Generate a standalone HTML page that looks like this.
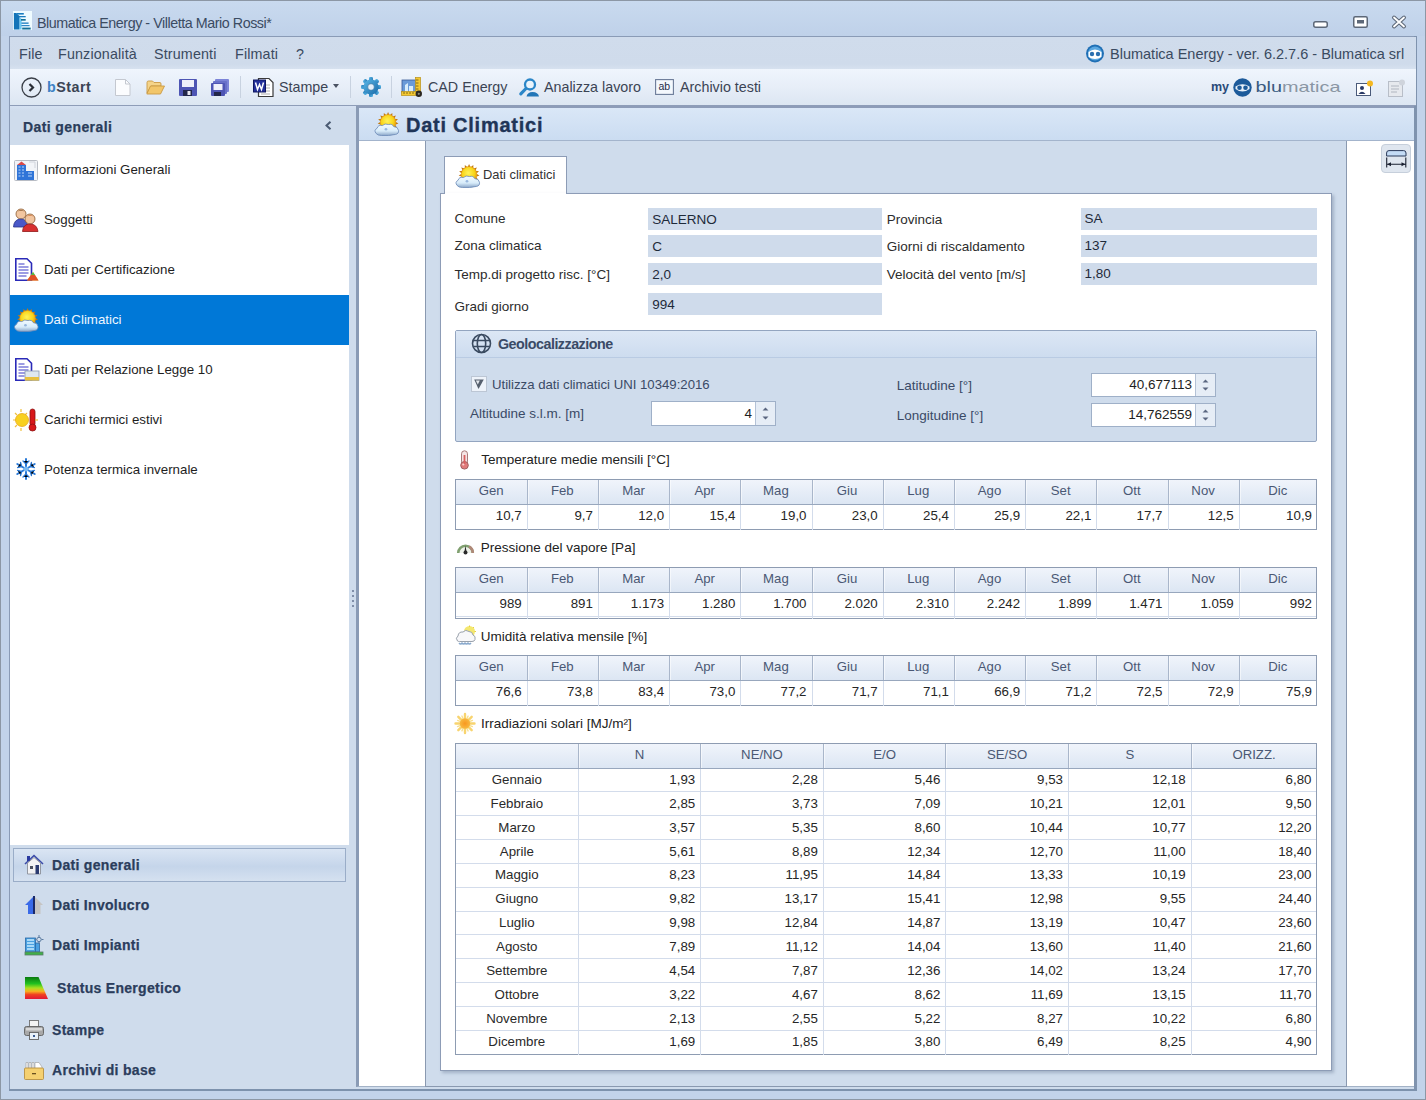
<!DOCTYPE html>
<html><head><meta charset="utf-8">
<style>
*{margin:0;padding:0;box-sizing:border-box}
html,body{width:1426px;height:1100px;overflow:hidden}
body{position:relative;background:#c3d4ea;font-family:"Liberation Sans",sans-serif;color:#222}
.a{position:absolute}
.t{position:absolute;white-space:nowrap;line-height:1}
svg{position:absolute;overflow:visible}
</style></head><body>
<div class="a" style="left:0px;top:0px;width:1426px;height:1100px;border:1px solid #8c97a5;background:#c2d3ea"></div>
<div class="a" style="left:1px;top:1px;width:1424px;height:35px;background:linear-gradient(#c9daef,#bfd1e9)"></div>
<svg style="left:13px;top:11px" width="19" height="19" viewBox="0 0 19 19"><rect x="0" y="0" width="19" height="19" fill="#effbff"/>
<path d="M0.9 2 L3 2 L6.6 5 V18.6 H0.9Z" fill="#1474b8"/>
<path d="M6.6 6 L8.6 8 V18.6 H6.6Z" fill="#6ccaf4"/>
<rect x="3.3" y="2" width="7.5" height="1.6" fill="#1a7cc0"/>
<rect x="5.7" y="5" width="7" height="1.3" fill="#1a7cc0"/>
<rect x="8" y="8" width="4.7" height="1.7" fill="#147098"/>
<rect x="8.4" y="11.5" width="7.2" height="1.3" fill="#1a7cc0"/>
<rect x="8.4" y="14.1" width="8.2" height="1.1" fill="#1a7cc0"/>
<rect x="9.2" y="16.6" width="8.5" height="1.9" fill="#147098"/></svg>
<div class="t" style="top:15.50px;font-size:14.3px;color:#3b4b62;letter-spacing:-0.45px;left:37px;">Blumatica Energy - Villetta Mario Rossi*</div>
<svg style="left:1313px;top:21px" width="15" height="7" viewBox="0 0 15 7"><rect x="0.75" y="0.75" width="13.5" height="5.5" rx="2" fill="#fff" stroke="#5d6878" stroke-width="1.5"/></svg>
<svg style="left:1353px;top:16px" width="15" height="12" viewBox="0 0 15 12"><rect x="0.75" y="0.75" width="13.5" height="10.5" rx="1.5" fill="#fff" stroke="#5d6878" stroke-width="1.5"/><rect x="4" y="4" width="7" height="3.5" fill="#5d6878"/></svg>
<svg style="left:1392px;top:16px" width="14" height="12" viewBox="0 0 14 12"><path d="M2 1.5 L12 10.5 M12 1.5 L2 10.5" stroke="#5d6878" stroke-width="4" stroke-linecap="round"/><path d="M2 1.5 L12 10.5 M12 1.5 L2 10.5" stroke="#fff" stroke-width="1.8" stroke-linecap="round"/></svg>
<div class="a" style="left:9px;top:36px;width:1408px;height:1055px;border-left:1px solid #8a9bb6;border-top:1px solid #8a9bb6;background:#cfdcec"></div>
<div class="a" style="left:1414px;top:36px;width:3px;height:1055px;background:#7f93ae"></div>
<div class="a" style="left:9px;top:1089px;width:1408px;height:2px;background:#7d92ad"></div>
<div class="a" style="left:10px;top:37px;width:1406px;height:32px;background:linear-gradient(#d0dcec,#cfdbeb 85%,#d6e1ef)"></div>
<div class="t" style="top:47.10px;font-size:14.3px;color:#3a4a60;letter-spacing:0.15px;left:19px;">File</div>
<div class="t" style="top:47.10px;font-size:14.3px;color:#3a4a60;letter-spacing:0.15px;left:58px;">Funzionalità</div>
<div class="t" style="top:47.10px;font-size:14.3px;color:#3a4a60;letter-spacing:0.15px;left:154px;">Strumenti</div>
<div class="t" style="top:47.10px;font-size:14.3px;color:#3a4a60;letter-spacing:0.15px;left:235px;">Filmati</div>
<div class="t" style="top:47.10px;font-size:14.3px;color:#3a4a60;letter-spacing:0.15px;left:296px;">?</div>
<svg style="left:1085px;top:44px" width="20" height="19" viewBox="0 0 20 19"><circle cx="10" cy="9.5" r="9" fill="#1f6fb5"/><circle cx="10" cy="9.5" r="7" fill="#5aa7e0"/>
<path d="M3.5 8 Q10 3 16.5 8 L16.5 13 Q10 17 3.5 13Z" fill="#fff"/>
<circle cx="7" cy="10" r="2.2" fill="#2a6fb0"/><circle cx="13" cy="10" r="2.2" fill="#2a6fb0"/></svg>
<div class="t" style="top:46.93px;font-size:14.5px;color:#3a4a60;left:1110px;">Blumatica Energy - ver. 6.2.7.6 - Blumatica srl</div>
<div class="a" style="left:10px;top:69px;width:1406px;height:36px;background:linear-gradient(#eff5fd,#e7eef8 50%,#dce6f2)"></div>
<div class="a" style="left:10px;top:105px;width:1406px;height:1px;background:#8e9db8"></div>
<svg style="left:21px;top:77px" width="21" height="21" viewBox="0 0 21 21"><circle cx="10.5" cy="10.5" r="9.5" fill="none" stroke="#3a3f48" stroke-width="1.3"/><path d="M8.5 7 L12 10.5 L8.5 14" fill="none" stroke="#2a2e36" stroke-width="2.2"/></svg>
<div class="t" style="top:80.10px;font-size:14.3px;color:#3b4454;font-weight:bold;letter-spacing:0.5px;left:47px;"><span style="color:#3d82c4">b</span>Start</div>
<svg style="left:115px;top:79px" width="16" height="17" viewBox="0 0 16 17"><path d="M0.5 0.5 H10.5 L15 5 V16.5 H0.5Z" fill="#fbfcfe" stroke="#c4c8d0"/><path d="M10.5 0.5 V5 H15" fill="none" stroke="#c4c8d0"/></svg>
<svg style="left:146px;top:80px" width="19" height="15" viewBox="0 0 19 15"><path d="M1 2.5 Q1 1 2.5 1 H6.5 L8 2.5 H14 Q15 2.5 15 4 V6 H5 L1 13Z" fill="#f5d48a" stroke="#c99a45" stroke-width="0.9"/><path d="M4.5 6 H18.5 L14.5 14 H0.8Z" fill="#f2c66a" stroke="#c99a45" stroke-width="0.9"/></svg>
<svg style="left:179px;top:79px" width="18" height="17" viewBox="0 0 18 17"><rect x="0" y="0" width="18" height="17" rx="1" fill="#4e55b4"/><rect x="3" y="1" width="12" height="7" fill="#eef0fa"/><rect x="4" y="11" width="9" height="6" fill="#23264a"/><rect x="8.5" y="12" width="3" height="4" fill="#e8e8f0"/></svg>
<svg style="left:211px;top:79px" width="18" height="17" viewBox="0 0 18 17"><rect x="4" y="0" width="14" height="13" rx="1" fill="#7c84d8"/><rect x="2" y="2" width="14" height="13" rx="1" fill="#6870c8"/><rect x="0" y="4" width="14" height="13" rx="1" fill="#4e55b4"/><rect x="2.5" y="5" width="9" height="6" fill="#eef0fa"/><rect x="3" y="13" width="7" height="4" fill="#23264a"/></svg>
<div class="a" style="left:240px;top:76px;width:1px;height:22px;background:#c8d2e0"></div>
<svg style="left:253px;top:77px" width="21" height="20" viewBox="0 0 21 20"><path d="M5.5 1.5 H16 L20 5.5 V19.5 H5.5Z" fill="#fff" stroke="#3a3a3a" stroke-width="1.2"/><path d="M8 8h9M8 11h9M8 14h9M8 17h9" stroke="#999" stroke-width="0.8"/><rect x="0.5" y="3" width="12" height="12" fill="#24309a" stroke="#101860"/><path d="M2.5 5.5 L4.5 12.5 L6.5 7.5 L8.5 12.5 L10.5 5.5" fill="none" stroke="#fff" stroke-width="1.5"/></svg>
<div class="t" style="top:80.10px;font-size:14.3px;color:#3b4454;left:279px;">Stampe</div>
<svg style="left:333px;top:84px" width="6" height="4" viewBox="0 0 6 4"><path d="M0 0H6L3 4Z" fill="#4a5262"/></svg>
<div class="a" style="left:350px;top:76px;width:1px;height:22px;background:#c8d2e0"></div>
<svg style="left:361px;top:77px" width="20" height="20" viewBox="0 0 20 20"><defs><linearGradient id="gearG" x1="0" y1="0" x2="1" y2="1"><stop offset="0" stop-color="#5ab8e8"/><stop offset="1" stop-color="#1a6aa8"/></linearGradient></defs><g transform="translate(10 10)" fill="url(#gearG)"><rect x="-2" y="-10" width="4" height="5" rx="1.2" transform="rotate(0)"/><rect x="-2" y="-10" width="4" height="5" rx="1.2" transform="rotate(45)"/><rect x="-2" y="-10" width="4" height="5" rx="1.2" transform="rotate(90)"/><rect x="-2" y="-10" width="4" height="5" rx="1.2" transform="rotate(135)"/><rect x="-2" y="-10" width="4" height="5" rx="1.2" transform="rotate(180)"/><rect x="-2" y="-10" width="4" height="5" rx="1.2" transform="rotate(225)"/><rect x="-2" y="-10" width="4" height="5" rx="1.2" transform="rotate(270)"/><rect x="-2" y="-10" width="4" height="5" rx="1.2" transform="rotate(315)"/><circle r="7.6"/><circle r="3.3" fill="#e4f0fa" stroke="#2a6a98" stroke-width="0.6"/></g></svg>
<div class="a" style="left:391px;top:76px;width:1px;height:22px;background:#c8d2e0"></div>
<svg style="left:401px;top:77px" width="22" height="20" viewBox="0 0 22 20"><rect x="1" y="3" width="14" height="13" fill="#6a9ad8" stroke="#3a5a98" stroke-width="0.8"/><path d="M4 15 V8 L7 6 V15Z M8 15 V9 H12 V15Z" fill="#d8ecfa"/><rect x="14.5" y="0.5" width="5" height="17" fill="#f4c830" stroke="#b89018" stroke-width="0.7"/><path d="M15 3h2.5M15 6h2.5M15 9h2.5M15 12h2.5" stroke="#6a5010" stroke-width="0.8"/><rect x="0.5" y="14.5" width="15" height="4" fill="#f4c830" stroke="#b89018" stroke-width="0.7"/><path d="M3 15v2M6 15v2M9 15v2M12 15v2" stroke="#6a5010" stroke-width="0.8"/><circle cx="17.8" cy="16.8" r="3.2" fill="#2a2620"/><circle cx="17.8" cy="16.8" r="1.1" fill="#8a8a80"/></svg>
<div class="t" style="top:80.10px;font-size:14.3px;color:#3b4454;left:428px;">CAD Energy</div>
<svg style="left:519px;top:78px" width="21" height="19" viewBox="0 0 21 19"><circle cx="11" cy="6.5" r="5" fill="#eaf4fc" stroke="#2b86c8" stroke-width="2.3"/><path d="M7 10.5 L1.8 15.8" stroke="#2b86c8" stroke-width="3.2" stroke-linecap="round"/><path d="M7.5 18.5 Q8.5 14 13.5 14 Q19 14 20 18.5Z" fill="#2276b8"/></svg>
<div class="t" style="top:80.10px;font-size:14.3px;color:#3b4454;left:544px;">Analizza lavoro</div>
<svg style="left:655px;top:79px" width="19" height="16" viewBox="0 0 19 16"><rect x="0.6" y="0.6" width="17.8" height="14.8" fill="#f4f8fd" stroke="#6a7a98" stroke-width="1.1"/><text x="9.3" y="11.3" font-family="Liberation Sans" font-size="10.5" fill="#1e2a48" text-anchor="middle">ab</text></svg>
<div class="t" style="top:80.10px;font-size:14.3px;color:#3b4454;left:680px;">Archivio testi</div>
<div class="t" style="top:81.42px;font-size:12.5px;color:#2a4a7a;font-weight:bold;left:1211px;">my</div>
<svg style="left:1233px;top:78px" width="19" height="19" viewBox="0 0 19 19"><circle cx="9.5" cy="9.5" r="9.2" fill="#1c5a9a"/><path d="M2.5 8.5 Q9.5 4 16.5 8.5 V11 Q9.5 16 2.5 11Z" fill="#e8f0f8"/><circle cx="6.5" cy="9.8" r="2.3" fill="#1c5a9a"/><circle cx="12.5" cy="9.8" r="2.3" fill="#1c5a9a"/></svg>
<svg style="left:1255px;top:78px" width="88" height="16" viewBox="0 0 88 16"><text x="0.5" y="13.5" font-family="Liberation Sans" font-size="15" textLength="85" lengthAdjust="spacingAndGlyphs" fill="#3a5878"><tspan fill="#3a5a80">blu</tspan><tspan fill="#8a96a4">matica</tspan></text></svg>
<svg style="left:1356px;top:80px" width="18" height="16" viewBox="0 0 18 16"><rect x="0.5" y="3.5" width="14" height="12" fill="#fff" stroke="#4a5a7a"/><circle cx="6" cy="8" r="2" fill="#2a3a66"/><path d="M2.5 14 Q6 9.5 9.5 14Z" fill="#2a3a66"/><circle cx="14" cy="3.5" r="3" fill="#f5b820"/></svg>
<svg style="left:1388px;top:79px" width="18" height="18" viewBox="0 0 18 18"><rect x="0.5" y="2.5" width="14" height="15" fill="#e6e9ee" stroke="#b8bec8"/><path d="M3 7h8M3 10h8M3 13h6" stroke="#b0b6c0"/><circle cx="14" cy="3.5" r="3" fill="#cfd4dc"/></svg>
<div class="a" style="left:10px;top:106px;width:347px;height:39px;background:linear-gradient(#d5e1f2,#cfdcec 12%)"></div>
<div class="t" style="top:119.75px;font-size:14px;color:#2a3c5a;font-weight:bold;letter-spacing:0.4px;left:23px;-webkit-text-stroke:0.25px #2a3c5a;">Dati generali</div>
<svg style="left:325px;top:121px" width="7" height="9" viewBox="0 0 7 9"><path d="M5.5 0.8 L1.5 4.5 L5.5 8.2" fill="none" stroke="#4a5a72" stroke-width="2"/></svg>
<div class="a" style="left:10px;top:145px;width:339px;height:700px;background:#fff"></div>
<div class="a" style="left:10px;top:295px;width:339px;height:50px;background:#0078d7"></div>
<div class="t" style="top:163.44px;font-size:13.3px;color:#1e1e1e;left:44px;">Informazioni Generali</div>
<div class="t" style="top:213.44px;font-size:13.3px;color:#1e1e1e;left:44px;">Soggetti</div>
<div class="t" style="top:263.44px;font-size:13.3px;color:#1e1e1e;left:44px;">Dati per Certificazione</div>
<div class="t" style="top:313.44px;font-size:13.3px;color:#eef6ff;left:44px;">Dati Climatici</div>
<div class="t" style="top:363.44px;font-size:13.3px;color:#1e1e1e;left:44px;">Dati per Relazione Legge 10</div>
<div class="t" style="top:413.44px;font-size:13.3px;color:#1e1e1e;left:44px;">Carichi termici estivi</div>
<div class="t" style="top:463.44px;font-size:13.3px;color:#1e1e1e;left:44px;">Potenza termica invernale</div>
<div class="a" style="left:351.5px;top:590px;width:2px;height:2px;background:#7f8ea8"></div>
<div class="a" style="left:351.5px;top:595px;width:2px;height:2px;background:#7f8ea8"></div>
<div class="a" style="left:351.5px;top:600px;width:2px;height:2px;background:#7f8ea8"></div>
<div class="a" style="left:351.5px;top:605px;width:2px;height:2px;background:#7f8ea8"></div>
<div class="a" style="left:13px;top:848px;width:333px;height:34px;border:1px solid #9aadc8;background:linear-gradient(#dae5f3,#c5d5ea 55%,#d5e1f0)"></div>
<div class="t" style="top:858.15px;font-size:14px;color:#2b3d5c;font-weight:bold;letter-spacing:0.3px;left:52px;-webkit-text-stroke:0.25px #2b3d5c;">Dati generali</div>
<div class="t" style="top:898.45px;font-size:14px;color:#2b3d5c;font-weight:bold;letter-spacing:0.3px;left:52px;-webkit-text-stroke:0.25px #2b3d5c;">Dati Involucro</div>
<div class="t" style="top:938.45px;font-size:14px;color:#2b3d5c;font-weight:bold;letter-spacing:0.3px;left:52px;-webkit-text-stroke:0.25px #2b3d5c;">Dati Impianti</div>
<div class="t" style="top:981.35px;font-size:14px;color:#2b3d5c;font-weight:bold;letter-spacing:0.3px;left:57px;-webkit-text-stroke:0.25px #2b3d5c;">Status Energetico</div>
<div class="t" style="top:1023.05px;font-size:14px;color:#2b3d5c;font-weight:bold;letter-spacing:0.3px;left:52px;-webkit-text-stroke:0.25px #2b3d5c;">Stampe</div>
<div class="t" style="top:1062.65px;font-size:14px;color:#2b3d5c;font-weight:bold;letter-spacing:0.3px;left:52px;-webkit-text-stroke:0.25px #2b3d5c;">Archivi di base</div>
<div class="a" style="left:356px;top:106px;width:1058px;height:981px;border-left:3px solid #8a9bb5;border-top:2px solid #8d9cb8;border-bottom:1px solid #a3b2c6;background:#fff"></div>
<div class="a" style="left:359px;top:108px;width:1055px;height:33px;background:linear-gradient(#dae7f7,#cadcf1)"></div>
<div class="a" style="left:359px;top:140px;width:1055px;height:1px;background:#a3b4cc"></div>
<div class="t" style="top:114.57px;font-size:20px;color:#1f3558;font-weight:bold;letter-spacing:0.75px;left:406px;-webkit-text-stroke:0.35px #1f3558;">Dati Climatici</div>
<div class="a" style="left:425px;top:141px;width:922px;height:946px;border:1px solid #8a99b0;border-top:none;background:#cfdcec"></div>
<div class="a" style="left:444px;top:156px;width:123px;height:39px;border:1px solid #8d9cb6;border-bottom:none;background:#fff"></div>
<div class="t" style="top:169.08px;font-size:12.9px;color:#333;left:483px;">Dati climatici</div>
<div class="a" style="left:440px;top:193px;width:892px;height:878px;border:1px solid #8d9cb6;background:#fff;box-shadow:2px 2px 3px rgba(80,100,130,.35)"></div>
<div class="a" style="left:445px;top:193px;width:121px;height:2px;background:#fff"></div>
<div class="a" style="left:1381px;top:144px;width:30px;height:29px;border:1px solid #c6cfdb;border-radius:4px;background:#dfe6ef"></div>
<svg style="left:1386px;top:150px" width="21" height="18" viewBox="0 0 21 18"><path d="M0.6 6 V3 Q0.6 0.6 3 0.6 H17.6 Q20 0.6 20 3 V6 Z" fill="#c4dcf6" stroke="#2a3a5a" stroke-width="1"/><path d="M0.7 7.5v10M19.8 7.5v10M1 14.2H19.5" stroke="#1a2030" stroke-width="1.1"/><path d="M1.2 14.2 L5 12.2 V16.2Z M19.3 14.2 L15.5 12.2 V16.2Z" fill="#1a2030"/></svg>
<svg width="0" height="0" style="position:absolute"><defs>
<radialGradient id="sunG" cx="0.45" cy="0.4" r="0.6"><stop offset="0" stop-color="#fff35a"/><stop offset="0.7" stop-color="#f8d418"/><stop offset="1" stop-color="#e8a010"/></radialGradient>
<linearGradient id="cloudG" x1="0" y1="0" x2="0" y2="1"><stop offset="0" stop-color="#f4fbff"/><stop offset="0.6" stop-color="#d8ecfa"/><stop offset="1" stop-color="#8aa6c8"/></linearGradient>
<g id="suncloud">
 <g transform="translate(13.5 11)">
  <g fill="#c07810">
<path d="M0 -10 L1.4 -7 L-1.4 -7Z" transform="rotate(-120)"/><path d="M0 -10 L1.4 -7 L-1.4 -7Z" transform="rotate(-96)"/><path d="M0 -10 L1.4 -7 L-1.4 -7Z" transform="rotate(-72)"/><path d="M0 -10 L1.4 -7 L-1.4 -7Z" transform="rotate(-48)"/><path d="M0 -10 L1.4 -7 L-1.4 -7Z" transform="rotate(-24)"/><path d="M0 -10 L1.4 -7 L-1.4 -7Z" transform="rotate(0)"/><path d="M0 -10 L1.4 -7 L-1.4 -7Z" transform="rotate(24)"/><path d="M0 -10 L1.4 -7 L-1.4 -7Z" transform="rotate(48)"/><path d="M0 -10 L1.4 -7 L-1.4 -7Z" transform="rotate(72)"/><path d="M0 -10 L1.4 -7 L-1.4 -7Z" transform="rotate(96)"/><path d="M0 -10 L1.4 -7 L-1.4 -7Z" transform="rotate(120)"/><path d="M0 -10 L1.4 -7 L-1.4 -7Z" transform="rotate(144)"/>
  </g>
  <circle r="7.8" fill="#e8a018"/><circle r="7.1" fill="url(#sunG)"/>
 </g>
 <path d="M2 21.5 Q-0.5 18.5 3 16.5 Q4 13 8 14 Q10.5 11.5 14 13 Q17.5 12 19 15 Q23 15 23.5 18.5 Q24 22 20.5 22.5 Q14 24 7 23.5 Q3.5 23.5 2 21.5Z" fill="url(#cloudG)" stroke="#6e8cb8" stroke-width="0.8"/>
 <circle cx="11.5" cy="17.5" r="1.3" fill="#7aa0d0" opacity="0.7"/>
</g>
</defs></svg>
<svg style="left:374px;top:111px" width="25" height="25" viewBox="0 0 24 24"><use href="#suncloud"/></svg>
<svg style="left:455px;top:163px" width="25" height="25" viewBox="0 0 24 24"><use href="#suncloud"/></svg>
<svg style="left:13px;top:307px" width="26" height="25" viewBox="0 0 24 24"><use href="#suncloud"/></svg>
<svg style="left:14px;top:160px" width="24" height="21" viewBox="0 0 24 21"><rect x="0.5" y="0.5" width="23" height="20" rx="1" fill="#f2f4f8" stroke="#b8bcc4"/><rect x="3" y="5" width="9" height="15" fill="#2f74d8"/><path d="M3 5 L7.5 1.5 L12 5Z" fill="#d84848"/><rect x="12" y="11" width="8" height="9" fill="#2f74d8"/><path d="M4.5 7h2M8 7h2M4.5 10h2M8 10h2M4.5 13h2M8 13h2M4.5 16h2M8 16h2M14 13h4M14 16h4" stroke="#b8d4f8" stroke-width="1.2"/><path d="M15 2h6v6" fill="none" stroke="#d0d4dc"/></svg>
<svg style="left:13px;top:207px" width="26" height="25" viewBox="0 0 26 25"><circle cx="8" cy="7" r="5" fill="#f2c6a0" stroke="#8a5a30" stroke-width="0.8"/><path d="M3 6 Q8 0 13 6 Q11 3.5 8 3.8 Q5 3.5 3 6Z" fill="#7a4a20"/><path d="M0.5 20 Q1 12 8 12 Q14 12 14.5 20Z" fill="#4a58c8" stroke="#2a3488" stroke-width="0.8"/><circle cx="17" cy="12" r="5" fill="#f2c6a0" stroke="#8a5a30" stroke-width="0.8"/><path d="M12 11 Q17 5 22 11 Q20 8.5 17 8.8 Q14 8.5 12 11Z" fill="#c86a30"/><path d="M9.5 24.5 Q10 17 17 17 Q24 17 25 24.5Z" fill="#d83030" stroke="#901818" stroke-width="0.8"/></svg>
<svg style="left:15px;top:258px" width="24" height="23" viewBox="0 0 24 23"><path d="M0.8 0.8 H12 L16.5 5.3 V22.2 H0.8Z" fill="#fff" stroke="#2a2ab8" stroke-width="1.6"/><path d="M3.5 6h6M3.5 9h10M3.5 12h10M3.5 15h10M3.5 18h8" stroke="#3a3ac8" stroke-width="1.2"/><path d="M12 22.5 L18 14 L23.5 22.5Z" fill="#e8b030"/><path d="M16 17 L20 17 L23.5 22.5 H12Z" fill="#e05028"/><path d="M18 14 L20 17 H16Z" fill="#50b848"/></svg>
<svg style="left:15px;top:358px" width="25" height="23" viewBox="0 0 25 23"><path d="M0.8 0.8 H12 L16.5 5.3 V22.2 H0.8Z" fill="#fff" stroke="#2a2ab8" stroke-width="1.6"/><path d="M3.5 6h6M3.5 9h10M3.5 12h10M3.5 15h8M3.5 18h6" stroke="#3a3ac8" stroke-width="1.2"/><rect x="10" y="13" width="14" height="9.5" fill="#dfe8f0" stroke="#8a9ab0" stroke-width="0.8"/><rect x="10" y="19" width="14" height="3.5" fill="#e8c040"/></svg>
<svg style="left:13px;top:408px" width="26" height="23" viewBox="0 0 26 23"><g stroke="#f0c040" stroke-width="1.2"><path d="M0 12h3M8 1v3M8 20v3M2 5l2 2M2 19l2-2M14 5l-2 2"/></g><circle cx="9" cy="12" r="6.5" fill="#f8d020" stroke="#e8a818" stroke-width="0.8"/><rect x="17" y="1" width="5" height="17" rx="2.5" fill="#d81818" stroke="#8a1010" stroke-width="0.8"/><circle cx="19.5" cy="19.5" r="3.5" fill="#d81818" stroke="#8a1010" stroke-width="0.8"/><path d="M22 12h3" stroke="#f0c040" stroke-width="1.2"/></svg>
<svg style="left:15px;top:458px" width="22" height="22" viewBox="0 0 22 22"><g transform="translate(11 11)" stroke="#2a7ad8" stroke-width="2" stroke-linecap="round"><path d="M0 -10V10M-8.7 -5L8.7 5M-8.7 5L8.7 -5"/><g stroke-width="1.3"><path d="M-3 -8L0 -5L3 -8M-3 8L0 5L3 8"/><path d="M-3 -8L0 -5L3 -8M-3 8L0 5L3 8" transform="rotate(60)"/><path d="M-3 -8L0 -5L3 -8M-3 8L0 5L3 8" transform="rotate(120)"/></g></g><circle cx="11" cy="11" r="2.5" fill="#7ab8f0"/></svg>
<svg style="left:24px;top:854px" width="20" height="21" viewBox="0 0 20 21"><path d="M1 10 L10 1.5 L19 10" fill="none" stroke="#3a4aa8" stroke-width="1.6"/><rect x="3" y="2" width="3" height="5" fill="#2a3aa0"/><path d="M3.5 9 L10 3.5 L16.5 9 V20 H3.5Z" fill="#f2f2f4" stroke="#8a8e98" stroke-width="0.9"/><rect x="6" y="12" width="3" height="3" fill="#4a5060"/><rect x="11.5" y="11" width="3.5" height="9" fill="#2a3a70"/></svg>
<svg style="left:24px;top:895px" width="20" height="20" viewBox="0 0 20 20"><path d="M10 1 L1 10 H4 V19 H10Z" fill="#3a6ae8"/><rect x="9" y="1" width="2" height="18" fill="#1a2a6a"/><path d="M11 2 L19 10 H16.5 V19 H11Z" fill="#c4c0bc" opacity="0.85"/></svg>
<svg style="left:25px;top:935px" width="18" height="20" viewBox="0 0 18 20"><rect x="0.5" y="3" width="10" height="14" fill="#4aa0e0" stroke="#2a6aa8" stroke-width="0.8"/><path d="M2 5h7M2 8h7M2 11h7M2 14h7" stroke="#c8ecff" stroke-width="1.5"/><rect x="10.5" y="8" width="4" height="9" fill="#4aa0e0" stroke="#2a6aa8" stroke-width="0.8"/><g stroke="#5a7aa0" stroke-width="1"><circle cx="14" cy="4.5" r="2.2" fill="none"/><path d="M14 0v2M14 7v2M9.5 4.5h2M16.5 4.5h2"/></g><rect x="0" y="17" width="18" height="3" fill="#40b048" stroke="#5a7a6a" stroke-width="0.8"/></svg>
<svg style="left:25px;top:977px" width="23" height="22" viewBox="0 0 23 22"><defs><linearGradient id="enG" x1="0" y1="0" x2="0" y2="1"><stop offset="0" stop-color="#0a7a10"/><stop offset="0.3" stop-color="#20c020"/><stop offset="0.5" stop-color="#a8e020"/><stop offset="0.65" stop-color="#f8b020"/><stop offset="0.8" stop-color="#f04020"/><stop offset="1" stop-color="#e01838"/></linearGradient></defs><path d="M0 0 H13.5 L23 22 H0Z" fill="url(#enG)"/></svg>
<svg style="left:24px;top:1020px" width="20" height="20" viewBox="0 0 20 20"><rect x="5.5" y="0.5" width="9" height="7" fill="#f4f4f4" stroke="#707070" stroke-width="0.9"/><rect x="0.5" y="6.5" width="19" height="9" rx="2" fill="#a8a8a8" stroke="#606060" stroke-width="0.9"/><rect x="2" y="8" width="16" height="2.5" fill="#d8d8d8"/><rect x="5.5" y="12.5" width="9" height="7" fill="#e8f0f8" stroke="#606060" stroke-width="0.9"/><rect x="9" y="15" width="2" height="2" fill="#3a5a90"/></svg>
<svg style="left:24px;top:1062px" width="20" height="18" viewBox="0 0 20 18"><path d="M2 0.5h2v6h-2zM5 0.5h2v6h-2zM8 0.5h2v6h-2z" fill="#f8f8f8" stroke="#9a9a9a" stroke-width="0.6"/><path d="M11 0.5 H15 L18 5 V7 H11Z" fill="#fff" stroke="#9a9a9a" stroke-width="0.6"/><rect x="0.5" y="6" width="19" height="11.5" rx="1" fill="#f5d070" stroke="#b89040" stroke-width="0.9"/><rect x="8" y="11" width="4" height="1.3" fill="#6a5020"/></svg>
<div class="t" style="top:212.37px;font-size:13.5px;color:#2c2c2c;left:454.5px;">Comune</div>
<div class="t" style="top:239.37px;font-size:13.5px;color:#2c2c2c;left:454.5px;">Zona climatica</div>
<div class="t" style="top:267.97px;font-size:13.5px;color:#2c2c2c;left:454.5px;">Temp.di progetto risc. [°C]</div>
<div class="t" style="top:300.37px;font-size:13.5px;color:#2c2c2c;left:454.5px;">Gradi giorno</div>
<div class="a" style="left:648px;top:207.5px;width:234px;height:22px;background:#cfdbeb"></div>
<div class="t" style="top:212.77px;font-size:13.5px;color:#1e2a3a;left:652.3px;">SALERNO</div>
<div class="a" style="left:648px;top:235.2px;width:234px;height:21.6px;background:#cfdbeb"></div>
<div class="t" style="top:240.17px;font-size:13.5px;color:#1e2a3a;left:652.3px;">C</div>
<div class="a" style="left:648px;top:262.6px;width:234px;height:22px;background:#cfdbeb"></div>
<div class="t" style="top:267.57px;font-size:13.5px;color:#1e2a3a;left:652.3px;">2,0</div>
<div class="a" style="left:648px;top:292.5px;width:234px;height:22px;background:#cfdbeb"></div>
<div class="t" style="top:297.57px;font-size:13.5px;color:#1e2a3a;left:652.3px;">994</div>
<div class="a" style="left:1081px;top:207.5px;width:236px;height:22px;background:#cfdbeb"></div>
<div class="t" style="top:212.57px;font-size:13.5px;color:#2c2c2c;left:886.8px;">Provincia</div>
<div class="t" style="top:212.17px;font-size:13.5px;color:#1e2a3a;left:1084.6px;">SA</div>
<div class="a" style="left:1081px;top:235.2px;width:236px;height:21.6px;background:#cfdbeb"></div>
<div class="t" style="top:239.57px;font-size:13.5px;color:#2c2c2c;left:886.8px;">Giorni di riscaldamento</div>
<div class="t" style="top:239.07px;font-size:13.5px;color:#1e2a3a;left:1084.6px;">137</div>
<div class="a" style="left:1081px;top:262.6px;width:236px;height:22px;background:#cfdbeb"></div>
<div class="t" style="top:267.57px;font-size:13.5px;color:#2c2c2c;left:886.8px;">Velocità del vento [m/s]</div>
<div class="t" style="top:266.87px;font-size:13.5px;color:#1e2a3a;left:1084.6px;">1,80</div>
<div class="a" style="left:455px;top:330px;width:862px;height:112px;border:1px solid #93a5c0;border-radius:2px;background:#cfdcec"></div>
<div class="a" style="left:456px;top:331px;width:860px;height:27px;background:linear-gradient(#dce7f5,#cddcef);border-bottom:1px solid #b9cbe3"></div>
<svg style="left:471px;top:333px" width="21" height="21" viewBox="0 0 21 21"><g fill="none" stroke="#3a4a60" stroke-width="1.6"><circle cx="10.5" cy="10.5" r="9"/><ellipse cx="10.5" cy="10.5" rx="4.2" ry="9"/><path d="M2.2 7.5H18.8M2.2 13.5H18.8"/></g></svg>
<div class="t" style="top:336.70px;font-size:14.3px;color:#3a4a66;font-weight:bold;letter-spacing:-0.5px;left:498px;">Geolocalizzazione</div>
<svg style="left:471px;top:376px" width="16" height="16" viewBox="0 0 16 16"><rect x="0.5" y="0.5" width="15" height="15" fill="#eef3fa" stroke="#bcc6d4"/><path d="M3.2 3.5 H12.8 L7.5 13Z" fill="#56606e"/><path d="M4.8 4.6 H8.8 L6.8 8.6Z" fill="#e4e8ee"/></svg>
<div class="t" style="top:378.23px;font-size:13.2px;color:#3a4a66;left:492px;">Utilizza dati climatici UNI 10349:2016</div>
<div class="t" style="top:406.77px;font-size:13.5px;color:#3a4a66;left:470px;">Altitudine s.l.m. [m]</div>
<div class="t" style="top:378.77px;font-size:13.5px;color:#3a4a66;left:896.7px;">Latitudine [°]</div>
<div class="t" style="top:408.67px;font-size:13.5px;color:#3a4a66;left:896.7px;">Longitudine [°]</div>
<div class="a" style="left:651px;top:401px;width:125px;height:25px;border:1px solid #9fb0c8;background:#fff"></div>
<div class="a" style="left:755px;top:402px;width:20px;height:23px;background:#e6edf6;border-left:1px solid #b4c2d6"></div>
<svg style="left:762px;top:407px" width="7" height="13" viewBox="0 0 7 13"><path d="M0.5 3.5 L3.5 0.5 L6.5 3.5Z M0.5 9.5 L3.5 12.5 L6.5 9.5Z" fill="#5a6680"/></svg>
<div class="t" style="top:407.37px;font-size:13.5px;color:#1e1e1e;right:674px;">4</div>
<div class="a" style="left:1091px;top:373px;width:125px;height:24px;border:1px solid #9fb0c8;background:#fff"></div>
<div class="a" style="left:1195px;top:374px;width:20px;height:22px;background:#e6edf6;border-left:1px solid #b4c2d6"></div>
<svg style="left:1202px;top:379px" width="7" height="12" viewBox="0 0 7 12"><path d="M0.5 3.5 L3.5 0.5 L6.5 3.5Z M0.5 8.5 L3.5 11.5 L6.5 8.5Z" fill="#5a6680"/></svg>
<div class="t" style="top:378.37px;font-size:13.5px;color:#1e1e1e;right:234px;">40,677113</div>
<div class="a" style="left:1091px;top:403px;width:125px;height:24px;border:1px solid #9fb0c8;background:#fff"></div>
<div class="a" style="left:1195px;top:404px;width:20px;height:22px;background:#e6edf6;border-left:1px solid #b4c2d6"></div>
<svg style="left:1202px;top:409px" width="7" height="12" viewBox="0 0 7 12"><path d="M0.5 3.5 L3.5 0.5 L6.5 3.5Z M0.5 8.5 L3.5 11.5 L6.5 8.5Z" fill="#5a6680"/></svg>
<div class="t" style="top:408.37px;font-size:13.5px;color:#1e1e1e;right:234px;">14,762559</div>
<svg style="left:459px;top:450px" width="11" height="20" viewBox="0 0 11 20"><rect x="2.5" y="0.8" width="6" height="14" rx="3" fill="#f4e4e4" stroke="#a87a7a" stroke-width="1"/><circle cx="5.5" cy="15.3" r="3.8" fill="#e07a7a" stroke="#a06060" stroke-width="1"/><rect x="4.6" y="5" width="1.8" height="9" fill="#d86060"/><circle cx="4.3" cy="14.5" r="1.1" fill="#f8d0d0"/></svg>
<div class="t" style="top:453.07px;font-size:13.5px;color:#222;left:481.2px;">Temperature medie mensili [°C]</div>
<div class="a" style="left:455px;top:479px;width:862px;height:50.5px;border:1px solid #8e9cb2;background:#fff"></div>
<div class="a" style="left:456px;top:480px;width:860px;height:24px;background:linear-gradient(#f0f4fb,#dce6f3)"></div>
<div class="a" style="left:456px;top:504px;width:860px;height:1px;background:#98a7bd"></div>
<div class="a" style="left:527px;top:480px;width:1px;height:24px;background:#a9b6ca"></div>
<div class="a" style="left:528px;top:480px;width:1px;height:24px;background:rgba(255,255,255,.55)"></div>
<div class="a" style="left:527px;top:505px;width:1px;height:24.5px;background:#d3dceb"></div>
<div class="a" style="left:598px;top:480px;width:1px;height:24px;background:#a9b6ca"></div>
<div class="a" style="left:599px;top:480px;width:1px;height:24px;background:rgba(255,255,255,.55)"></div>
<div class="a" style="left:598px;top:505px;width:1px;height:24.5px;background:#d3dceb"></div>
<div class="a" style="left:669px;top:480px;width:1px;height:24px;background:#a9b6ca"></div>
<div class="a" style="left:670px;top:480px;width:1px;height:24px;background:rgba(255,255,255,.55)"></div>
<div class="a" style="left:669px;top:505px;width:1px;height:24.5px;background:#d3dceb"></div>
<div class="a" style="left:740px;top:480px;width:1px;height:24px;background:#a9b6ca"></div>
<div class="a" style="left:741px;top:480px;width:1px;height:24px;background:rgba(255,255,255,.55)"></div>
<div class="a" style="left:740px;top:505px;width:1px;height:24.5px;background:#d3dceb"></div>
<div class="a" style="left:812px;top:480px;width:1px;height:24px;background:#a9b6ca"></div>
<div class="a" style="left:813px;top:480px;width:1px;height:24px;background:rgba(255,255,255,.55)"></div>
<div class="a" style="left:812px;top:505px;width:1px;height:24.5px;background:#d3dceb"></div>
<div class="a" style="left:883px;top:480px;width:1px;height:24px;background:#a9b6ca"></div>
<div class="a" style="left:884px;top:480px;width:1px;height:24px;background:rgba(255,255,255,.55)"></div>
<div class="a" style="left:883px;top:505px;width:1px;height:24.5px;background:#d3dceb"></div>
<div class="a" style="left:954px;top:480px;width:1px;height:24px;background:#a9b6ca"></div>
<div class="a" style="left:955px;top:480px;width:1px;height:24px;background:rgba(255,255,255,.55)"></div>
<div class="a" style="left:954px;top:505px;width:1px;height:24.5px;background:#d3dceb"></div>
<div class="a" style="left:1025px;top:480px;width:1px;height:24px;background:#a9b6ca"></div>
<div class="a" style="left:1026px;top:480px;width:1px;height:24px;background:rgba(255,255,255,.55)"></div>
<div class="a" style="left:1025px;top:505px;width:1px;height:24.5px;background:#d3dceb"></div>
<div class="a" style="left:1096px;top:480px;width:1px;height:24px;background:#a9b6ca"></div>
<div class="a" style="left:1097px;top:480px;width:1px;height:24px;background:rgba(255,255,255,.55)"></div>
<div class="a" style="left:1096px;top:505px;width:1px;height:24.5px;background:#d3dceb"></div>
<div class="a" style="left:1168px;top:480px;width:1px;height:24px;background:#a9b6ca"></div>
<div class="a" style="left:1169px;top:480px;width:1px;height:24px;background:rgba(255,255,255,.55)"></div>
<div class="a" style="left:1168px;top:505px;width:1px;height:24.5px;background:#d3dceb"></div>
<div class="a" style="left:1239px;top:480px;width:1px;height:24px;background:#a9b6ca"></div>
<div class="a" style="left:1240px;top:480px;width:1px;height:24px;background:rgba(255,255,255,.55)"></div>
<div class="a" style="left:1239px;top:505px;width:1px;height:24.5px;background:#d3dceb"></div>
<div class="t" style="top:484.23px;font-size:13.2px;color:#4a5874;left:341.1px;width:300px;text-align:center;">Gen</div>
<div class="t" style="top:509.04px;font-size:13.3px;color:#262626;right:904.3px;">10,7</div>
<div class="t" style="top:484.23px;font-size:13.2px;color:#4a5874;left:412.29999999999995px;width:300px;text-align:center;">Feb</div>
<div class="t" style="top:509.04px;font-size:13.3px;color:#262626;right:833.1px;">9,7</div>
<div class="t" style="top:484.23px;font-size:13.2px;color:#4a5874;left:483.5px;width:300px;text-align:center;">Mar</div>
<div class="t" style="top:509.04px;font-size:13.3px;color:#262626;right:761.9px;">12,0</div>
<div class="t" style="top:484.23px;font-size:13.2px;color:#4a5874;left:554.7px;width:300px;text-align:center;">Apr</div>
<div class="t" style="top:509.04px;font-size:13.3px;color:#262626;right:690.7px;">15,4</div>
<div class="t" style="top:484.23px;font-size:13.2px;color:#4a5874;left:625.9px;width:300px;text-align:center;">Mag</div>
<div class="t" style="top:509.04px;font-size:13.3px;color:#262626;right:619.5px;">19,0</div>
<div class="t" style="top:484.23px;font-size:13.2px;color:#4a5874;left:697.1px;width:300px;text-align:center;">Giu</div>
<div class="t" style="top:509.04px;font-size:13.3px;color:#262626;right:548.3px;">23,0</div>
<div class="t" style="top:484.23px;font-size:13.2px;color:#4a5874;left:768.3000000000001px;width:300px;text-align:center;">Lug</div>
<div class="t" style="top:509.04px;font-size:13.3px;color:#262626;right:477.0999999999999px;">25,4</div>
<div class="t" style="top:484.23px;font-size:13.2px;color:#4a5874;left:839.5px;width:300px;text-align:center;">Ago</div>
<div class="t" style="top:509.04px;font-size:13.3px;color:#262626;right:405.9000000000001px;">25,9</div>
<div class="t" style="top:484.23px;font-size:13.2px;color:#4a5874;left:910.7px;width:300px;text-align:center;">Set</div>
<div class="t" style="top:509.04px;font-size:13.3px;color:#262626;right:334.6999999999998px;">22,1</div>
<div class="t" style="top:484.23px;font-size:13.2px;color:#4a5874;left:981.9000000000001px;width:300px;text-align:center;">Ott</div>
<div class="t" style="top:509.04px;font-size:13.3px;color:#262626;right:263.5px;">17,7</div>
<div class="t" style="top:484.23px;font-size:13.2px;color:#4a5874;left:1053.1px;width:300px;text-align:center;">Nov</div>
<div class="t" style="top:509.04px;font-size:13.3px;color:#262626;right:192.29999999999995px;">12,5</div>
<div class="t" style="top:484.23px;font-size:13.2px;color:#4a5874;left:1127.85px;width:300px;text-align:center;">Dic</div>
<div class="t" style="top:509.04px;font-size:13.3px;color:#262626;right:114px;">10,9</div>
<svg style="left:456px;top:539px" width="19" height="16" viewBox="0 0 19 16"><path d="M1.5 14 A8 8 0 0 1 17.5 14 Z" fill="#eef2ea"/><path d="M2.2 14 A7.3 7.3 0 0 1 16.8 14" fill="none" stroke="#80a070" stroke-width="2.6"/><path d="M13 7.5 A7.3 7.3 0 0 1 16.8 14" fill="none" stroke="#b08878" stroke-width="2.6"/><path d="M9.5 6.5 L8.3 13.5 L10.7 13.5Z" fill="#2a2a2a"/><circle cx="9.5" cy="13.5" r="2" fill="#2a2a2a"/></svg>
<div class="t" style="top:540.77px;font-size:13.5px;color:#222;left:480.8px;">Pressione del vapore [Pa]</div>
<div class="a" style="left:455px;top:566.5px;width:862px;height:52px;border:1px solid #8e9cb2;background:#fff"></div>
<div class="a" style="left:456px;top:567.5px;width:860px;height:24px;background:linear-gradient(#f0f4fb,#dce6f3)"></div>
<div class="a" style="left:456px;top:591.5px;width:860px;height:1px;background:#98a7bd"></div>
<div class="a" style="left:527px;top:567.5px;width:1px;height:24px;background:#a9b6ca"></div>
<div class="a" style="left:528px;top:567.5px;width:1px;height:24px;background:rgba(255,255,255,.55)"></div>
<div class="a" style="left:527px;top:592.5px;width:1px;height:26px;background:#d3dceb"></div>
<div class="a" style="left:598px;top:567.5px;width:1px;height:24px;background:#a9b6ca"></div>
<div class="a" style="left:599px;top:567.5px;width:1px;height:24px;background:rgba(255,255,255,.55)"></div>
<div class="a" style="left:598px;top:592.5px;width:1px;height:26px;background:#d3dceb"></div>
<div class="a" style="left:669px;top:567.5px;width:1px;height:24px;background:#a9b6ca"></div>
<div class="a" style="left:670px;top:567.5px;width:1px;height:24px;background:rgba(255,255,255,.55)"></div>
<div class="a" style="left:669px;top:592.5px;width:1px;height:26px;background:#d3dceb"></div>
<div class="a" style="left:740px;top:567.5px;width:1px;height:24px;background:#a9b6ca"></div>
<div class="a" style="left:741px;top:567.5px;width:1px;height:24px;background:rgba(255,255,255,.55)"></div>
<div class="a" style="left:740px;top:592.5px;width:1px;height:26px;background:#d3dceb"></div>
<div class="a" style="left:812px;top:567.5px;width:1px;height:24px;background:#a9b6ca"></div>
<div class="a" style="left:813px;top:567.5px;width:1px;height:24px;background:rgba(255,255,255,.55)"></div>
<div class="a" style="left:812px;top:592.5px;width:1px;height:26px;background:#d3dceb"></div>
<div class="a" style="left:883px;top:567.5px;width:1px;height:24px;background:#a9b6ca"></div>
<div class="a" style="left:884px;top:567.5px;width:1px;height:24px;background:rgba(255,255,255,.55)"></div>
<div class="a" style="left:883px;top:592.5px;width:1px;height:26px;background:#d3dceb"></div>
<div class="a" style="left:954px;top:567.5px;width:1px;height:24px;background:#a9b6ca"></div>
<div class="a" style="left:955px;top:567.5px;width:1px;height:24px;background:rgba(255,255,255,.55)"></div>
<div class="a" style="left:954px;top:592.5px;width:1px;height:26px;background:#d3dceb"></div>
<div class="a" style="left:1025px;top:567.5px;width:1px;height:24px;background:#a9b6ca"></div>
<div class="a" style="left:1026px;top:567.5px;width:1px;height:24px;background:rgba(255,255,255,.55)"></div>
<div class="a" style="left:1025px;top:592.5px;width:1px;height:26px;background:#d3dceb"></div>
<div class="a" style="left:1096px;top:567.5px;width:1px;height:24px;background:#a9b6ca"></div>
<div class="a" style="left:1097px;top:567.5px;width:1px;height:24px;background:rgba(255,255,255,.55)"></div>
<div class="a" style="left:1096px;top:592.5px;width:1px;height:26px;background:#d3dceb"></div>
<div class="a" style="left:1168px;top:567.5px;width:1px;height:24px;background:#a9b6ca"></div>
<div class="a" style="left:1169px;top:567.5px;width:1px;height:24px;background:rgba(255,255,255,.55)"></div>
<div class="a" style="left:1168px;top:592.5px;width:1px;height:26px;background:#d3dceb"></div>
<div class="a" style="left:1239px;top:567.5px;width:1px;height:24px;background:#a9b6ca"></div>
<div class="a" style="left:1240px;top:567.5px;width:1px;height:24px;background:rgba(255,255,255,.55)"></div>
<div class="a" style="left:1239px;top:592.5px;width:1px;height:26px;background:#d3dceb"></div>
<div class="a" style="left:456px;top:615.5px;width:860px;height:1px;background:#d3dceb"></div>
<div class="t" style="top:571.73px;font-size:13.2px;color:#4a5874;left:341.1px;width:300px;text-align:center;">Gen</div>
<div class="t" style="top:596.54px;font-size:13.3px;color:#262626;right:904.3px;">989</div>
<div class="t" style="top:571.73px;font-size:13.2px;color:#4a5874;left:412.29999999999995px;width:300px;text-align:center;">Feb</div>
<div class="t" style="top:596.54px;font-size:13.3px;color:#262626;right:833.1px;">891</div>
<div class="t" style="top:571.73px;font-size:13.2px;color:#4a5874;left:483.5px;width:300px;text-align:center;">Mar</div>
<div class="t" style="top:596.54px;font-size:13.3px;color:#262626;right:761.9px;">1.173</div>
<div class="t" style="top:571.73px;font-size:13.2px;color:#4a5874;left:554.7px;width:300px;text-align:center;">Apr</div>
<div class="t" style="top:596.54px;font-size:13.3px;color:#262626;right:690.7px;">1.280</div>
<div class="t" style="top:571.73px;font-size:13.2px;color:#4a5874;left:625.9px;width:300px;text-align:center;">Mag</div>
<div class="t" style="top:596.54px;font-size:13.3px;color:#262626;right:619.5px;">1.700</div>
<div class="t" style="top:571.73px;font-size:13.2px;color:#4a5874;left:697.1px;width:300px;text-align:center;">Giu</div>
<div class="t" style="top:596.54px;font-size:13.3px;color:#262626;right:548.3px;">2.020</div>
<div class="t" style="top:571.73px;font-size:13.2px;color:#4a5874;left:768.3000000000001px;width:300px;text-align:center;">Lug</div>
<div class="t" style="top:596.54px;font-size:13.3px;color:#262626;right:477.0999999999999px;">2.310</div>
<div class="t" style="top:571.73px;font-size:13.2px;color:#4a5874;left:839.5px;width:300px;text-align:center;">Ago</div>
<div class="t" style="top:596.54px;font-size:13.3px;color:#262626;right:405.9000000000001px;">2.242</div>
<div class="t" style="top:571.73px;font-size:13.2px;color:#4a5874;left:910.7px;width:300px;text-align:center;">Set</div>
<div class="t" style="top:596.54px;font-size:13.3px;color:#262626;right:334.6999999999998px;">1.899</div>
<div class="t" style="top:571.73px;font-size:13.2px;color:#4a5874;left:981.9000000000001px;width:300px;text-align:center;">Ott</div>
<div class="t" style="top:596.54px;font-size:13.3px;color:#262626;right:263.5px;">1.471</div>
<div class="t" style="top:571.73px;font-size:13.2px;color:#4a5874;left:1053.1px;width:300px;text-align:center;">Nov</div>
<div class="t" style="top:596.54px;font-size:13.3px;color:#262626;right:192.29999999999995px;">1.059</div>
<div class="t" style="top:571.73px;font-size:13.2px;color:#4a5874;left:1127.85px;width:300px;text-align:center;">Dic</div>
<div class="t" style="top:596.54px;font-size:13.3px;color:#262626;right:114px;">992</div>
<svg style="left:455px;top:625px" width="22" height="22" viewBox="0 0 22 22"><circle cx="14.5" cy="6.5" r="5.5" fill="#f4e870"/><path d="M14.5 0.5 V2 M19 2 L18 3 M21 6.5 H19.5" stroke="#e8d040" stroke-width="1"/><path d="M2.5 16 Q0 13 3 11 Q3.5 6.5 8 7 Q10.5 4 14 6.5 Q17.5 6.5 18 10 Q21 11 20 14.5 Q19.5 16.5 17 16.5 H4.5 Q3 16.5 2.5 16Z" fill="#f8f8fa" stroke="#9aa2ac" stroke-width="1"/><path d="M4 18 q1.5 2 3 0 q1.5 2 3 0 q1.5 2 3 0 q1.5 2 3 0" fill="none" stroke="#88a8cc" stroke-width="1.3"/></svg>
<div class="t" style="top:629.57px;font-size:13.5px;color:#222;left:480.8px;">Umidità relativa mensile [%]</div>
<div class="a" style="left:455px;top:655.2px;width:862px;height:51px;border:1px solid #8e9cb2;background:#fff"></div>
<div class="a" style="left:456px;top:656.2px;width:860px;height:24px;background:linear-gradient(#f0f4fb,#dce6f3)"></div>
<div class="a" style="left:456px;top:680.2px;width:860px;height:1px;background:#98a7bd"></div>
<div class="a" style="left:527px;top:656.2px;width:1px;height:24px;background:#a9b6ca"></div>
<div class="a" style="left:528px;top:656.2px;width:1px;height:24px;background:rgba(255,255,255,.55)"></div>
<div class="a" style="left:527px;top:681.2px;width:1px;height:25px;background:#d3dceb"></div>
<div class="a" style="left:598px;top:656.2px;width:1px;height:24px;background:#a9b6ca"></div>
<div class="a" style="left:599px;top:656.2px;width:1px;height:24px;background:rgba(255,255,255,.55)"></div>
<div class="a" style="left:598px;top:681.2px;width:1px;height:25px;background:#d3dceb"></div>
<div class="a" style="left:669px;top:656.2px;width:1px;height:24px;background:#a9b6ca"></div>
<div class="a" style="left:670px;top:656.2px;width:1px;height:24px;background:rgba(255,255,255,.55)"></div>
<div class="a" style="left:669px;top:681.2px;width:1px;height:25px;background:#d3dceb"></div>
<div class="a" style="left:740px;top:656.2px;width:1px;height:24px;background:#a9b6ca"></div>
<div class="a" style="left:741px;top:656.2px;width:1px;height:24px;background:rgba(255,255,255,.55)"></div>
<div class="a" style="left:740px;top:681.2px;width:1px;height:25px;background:#d3dceb"></div>
<div class="a" style="left:812px;top:656.2px;width:1px;height:24px;background:#a9b6ca"></div>
<div class="a" style="left:813px;top:656.2px;width:1px;height:24px;background:rgba(255,255,255,.55)"></div>
<div class="a" style="left:812px;top:681.2px;width:1px;height:25px;background:#d3dceb"></div>
<div class="a" style="left:883px;top:656.2px;width:1px;height:24px;background:#a9b6ca"></div>
<div class="a" style="left:884px;top:656.2px;width:1px;height:24px;background:rgba(255,255,255,.55)"></div>
<div class="a" style="left:883px;top:681.2px;width:1px;height:25px;background:#d3dceb"></div>
<div class="a" style="left:954px;top:656.2px;width:1px;height:24px;background:#a9b6ca"></div>
<div class="a" style="left:955px;top:656.2px;width:1px;height:24px;background:rgba(255,255,255,.55)"></div>
<div class="a" style="left:954px;top:681.2px;width:1px;height:25px;background:#d3dceb"></div>
<div class="a" style="left:1025px;top:656.2px;width:1px;height:24px;background:#a9b6ca"></div>
<div class="a" style="left:1026px;top:656.2px;width:1px;height:24px;background:rgba(255,255,255,.55)"></div>
<div class="a" style="left:1025px;top:681.2px;width:1px;height:25px;background:#d3dceb"></div>
<div class="a" style="left:1096px;top:656.2px;width:1px;height:24px;background:#a9b6ca"></div>
<div class="a" style="left:1097px;top:656.2px;width:1px;height:24px;background:rgba(255,255,255,.55)"></div>
<div class="a" style="left:1096px;top:681.2px;width:1px;height:25px;background:#d3dceb"></div>
<div class="a" style="left:1168px;top:656.2px;width:1px;height:24px;background:#a9b6ca"></div>
<div class="a" style="left:1169px;top:656.2px;width:1px;height:24px;background:rgba(255,255,255,.55)"></div>
<div class="a" style="left:1168px;top:681.2px;width:1px;height:25px;background:#d3dceb"></div>
<div class="a" style="left:1239px;top:656.2px;width:1px;height:24px;background:#a9b6ca"></div>
<div class="a" style="left:1240px;top:656.2px;width:1px;height:24px;background:rgba(255,255,255,.55)"></div>
<div class="a" style="left:1239px;top:681.2px;width:1px;height:25px;background:#d3dceb"></div>
<div class="t" style="top:660.43px;font-size:13.2px;color:#4a5874;left:341.1px;width:300px;text-align:center;">Gen</div>
<div class="t" style="top:685.24px;font-size:13.3px;color:#262626;right:904.3px;">76,6</div>
<div class="t" style="top:660.43px;font-size:13.2px;color:#4a5874;left:412.29999999999995px;width:300px;text-align:center;">Feb</div>
<div class="t" style="top:685.24px;font-size:13.3px;color:#262626;right:833.1px;">73,8</div>
<div class="t" style="top:660.43px;font-size:13.2px;color:#4a5874;left:483.5px;width:300px;text-align:center;">Mar</div>
<div class="t" style="top:685.24px;font-size:13.3px;color:#262626;right:761.9px;">83,4</div>
<div class="t" style="top:660.43px;font-size:13.2px;color:#4a5874;left:554.7px;width:300px;text-align:center;">Apr</div>
<div class="t" style="top:685.24px;font-size:13.3px;color:#262626;right:690.7px;">73,0</div>
<div class="t" style="top:660.43px;font-size:13.2px;color:#4a5874;left:625.9px;width:300px;text-align:center;">Mag</div>
<div class="t" style="top:685.24px;font-size:13.3px;color:#262626;right:619.5px;">77,2</div>
<div class="t" style="top:660.43px;font-size:13.2px;color:#4a5874;left:697.1px;width:300px;text-align:center;">Giu</div>
<div class="t" style="top:685.24px;font-size:13.3px;color:#262626;right:548.3px;">71,7</div>
<div class="t" style="top:660.43px;font-size:13.2px;color:#4a5874;left:768.3000000000001px;width:300px;text-align:center;">Lug</div>
<div class="t" style="top:685.24px;font-size:13.3px;color:#262626;right:477.0999999999999px;">71,1</div>
<div class="t" style="top:660.43px;font-size:13.2px;color:#4a5874;left:839.5px;width:300px;text-align:center;">Ago</div>
<div class="t" style="top:685.24px;font-size:13.3px;color:#262626;right:405.9000000000001px;">66,9</div>
<div class="t" style="top:660.43px;font-size:13.2px;color:#4a5874;left:910.7px;width:300px;text-align:center;">Set</div>
<div class="t" style="top:685.24px;font-size:13.3px;color:#262626;right:334.6999999999998px;">71,2</div>
<div class="t" style="top:660.43px;font-size:13.2px;color:#4a5874;left:981.9000000000001px;width:300px;text-align:center;">Ott</div>
<div class="t" style="top:685.24px;font-size:13.3px;color:#262626;right:263.5px;">72,5</div>
<div class="t" style="top:660.43px;font-size:13.2px;color:#4a5874;left:1053.1px;width:300px;text-align:center;">Nov</div>
<div class="t" style="top:685.24px;font-size:13.3px;color:#262626;right:192.29999999999995px;">72,9</div>
<div class="t" style="top:660.43px;font-size:13.2px;color:#4a5874;left:1127.85px;width:300px;text-align:center;">Dic</div>
<div class="t" style="top:685.24px;font-size:13.3px;color:#262626;right:114px;">75,9</div>
<svg style="left:454px;top:713px" width="22" height="21" viewBox="0 0 22 21"><defs><radialGradient id="sunO"><stop offset="0" stop-color="#f89820"/><stop offset="1" stop-color="#f8b840"/></radialGradient></defs><g transform="translate(11 10.5)"><g stroke="#f8d060" stroke-width="2.4" stroke-linecap="round" opacity="0.9"><path d="M0 -9.5V9.5M-9.5 0H9.5M-6.7 -6.7L6.7 6.7M-6.7 6.7L6.7 -6.7"/></g><g stroke="#f8e090" stroke-width="1.4" stroke-linecap="round" transform="rotate(22.5)"><path d="M0 -8V8M-8 0H8M-5.7 -5.7L5.7 5.7M-5.7 5.7L5.7 -5.7"/></g><circle r="5.2" fill="url(#sunO)"/></g></svg>
<div class="t" style="top:717.37px;font-size:13.5px;color:#222;left:481px;">Irradiazioni solari [MJ/m²]</div>
<div class="a" style="left:455px;top:742.5px;width:862px;height:312.70000000000005px;border:1px solid #8e9cb2;background:#fff"></div>
<div class="a" style="left:456px;top:743.5px;width:860px;height:24px;background:linear-gradient(#f0f4fb,#dce6f3)"></div>
<div class="a" style="left:456px;top:767.5px;width:860px;height:1px;background:#98a7bd"></div>
<div class="a" style="left:578px;top:743.5px;width:1px;height:24px;background:#a9b6ca"></div>
<div class="a" style="left:579px;top:743.5px;width:1px;height:24px;background:rgba(255,255,255,.55)"></div>
<div class="a" style="left:578px;top:768.5px;width:1px;height:286.20000000000005px;background:#d3dceb"></div>
<div class="a" style="left:700px;top:743.5px;width:1px;height:24px;background:#a9b6ca"></div>
<div class="a" style="left:701px;top:743.5px;width:1px;height:24px;background:rgba(255,255,255,.55)"></div>
<div class="a" style="left:700px;top:768.5px;width:1px;height:286.20000000000005px;background:#d3dceb"></div>
<div class="a" style="left:823px;top:743.5px;width:1px;height:24px;background:#a9b6ca"></div>
<div class="a" style="left:824px;top:743.5px;width:1px;height:24px;background:rgba(255,255,255,.55)"></div>
<div class="a" style="left:823px;top:768.5px;width:1px;height:286.20000000000005px;background:#d3dceb"></div>
<div class="a" style="left:945px;top:743.5px;width:1px;height:24px;background:#a9b6ca"></div>
<div class="a" style="left:946px;top:743.5px;width:1px;height:24px;background:rgba(255,255,255,.55)"></div>
<div class="a" style="left:945px;top:768.5px;width:1px;height:286.20000000000005px;background:#d3dceb"></div>
<div class="a" style="left:1068px;top:743.5px;width:1px;height:24px;background:#a9b6ca"></div>
<div class="a" style="left:1069px;top:743.5px;width:1px;height:24px;background:rgba(255,255,255,.55)"></div>
<div class="a" style="left:1068px;top:768.5px;width:1px;height:286.20000000000005px;background:#d3dceb"></div>
<div class="a" style="left:1191px;top:743.5px;width:1px;height:24px;background:#a9b6ca"></div>
<div class="a" style="left:1192px;top:743.5px;width:1px;height:24px;background:rgba(255,255,255,.55)"></div>
<div class="a" style="left:1191px;top:768.5px;width:1px;height:286.20000000000005px;background:#d3dceb"></div>
<div class="t" style="top:748.33px;font-size:13.2px;color:#4a5874;left:489.4000000000001px;width:300px;text-align:center;">N</div>
<div class="t" style="top:748.33px;font-size:13.2px;color:#4a5874;left:612.0px;width:300px;text-align:center;">NE/NO</div>
<div class="t" style="top:748.33px;font-size:13.2px;color:#4a5874;left:734.5999999999999px;width:300px;text-align:center;">E/O</div>
<div class="t" style="top:748.33px;font-size:13.2px;color:#4a5874;left:857.2px;width:300px;text-align:center;">SE/SO</div>
<div class="t" style="top:748.33px;font-size:13.2px;color:#4a5874;left:979.8px;width:300px;text-align:center;">S</div>
<div class="t" style="top:748.33px;font-size:13.2px;color:#4a5874;left:1104.05px;width:300px;text-align:center;">ORIZZ.</div>
<div class="t" style="top:773.04px;font-size:13.3px;color:#2a2a2a;left:366.79999999999995px;width:300px;text-align:center;">Gennaio</div>
<div class="t" style="top:773.04px;font-size:13.3px;color:#262626;right:730.8px;">1,93</div>
<div class="t" style="top:773.04px;font-size:13.3px;color:#262626;right:608.2px;">2,28</div>
<div class="t" style="top:773.04px;font-size:13.3px;color:#262626;right:485.6px;">5,46</div>
<div class="t" style="top:773.04px;font-size:13.3px;color:#262626;right:363.0px;">9,53</div>
<div class="t" style="top:773.04px;font-size:13.3px;color:#262626;right:240.4000000000001px;">12,18</div>
<div class="t" style="top:773.04px;font-size:13.3px;color:#262626;right:114.5px;">6,80</div>
<div class="a" style="left:456px;top:791px;width:860px;height:1px;background:#d3dceb"></div>
<div class="t" style="top:796.89px;font-size:13.3px;color:#2a2a2a;left:366.79999999999995px;width:300px;text-align:center;">Febbraio</div>
<div class="t" style="top:796.89px;font-size:13.3px;color:#262626;right:730.8px;">2,85</div>
<div class="t" style="top:796.89px;font-size:13.3px;color:#262626;right:608.2px;">3,73</div>
<div class="t" style="top:796.89px;font-size:13.3px;color:#262626;right:485.6px;">7,09</div>
<div class="t" style="top:796.89px;font-size:13.3px;color:#262626;right:363.0px;">10,21</div>
<div class="t" style="top:796.89px;font-size:13.3px;color:#262626;right:240.4000000000001px;">12,01</div>
<div class="t" style="top:796.89px;font-size:13.3px;color:#262626;right:114.5px;">9,50</div>
<div class="a" style="left:456px;top:815px;width:860px;height:1px;background:#d3dceb"></div>
<div class="t" style="top:820.74px;font-size:13.3px;color:#2a2a2a;left:366.79999999999995px;width:300px;text-align:center;">Marzo</div>
<div class="t" style="top:820.74px;font-size:13.3px;color:#262626;right:730.8px;">3,57</div>
<div class="t" style="top:820.74px;font-size:13.3px;color:#262626;right:608.2px;">5,35</div>
<div class="t" style="top:820.74px;font-size:13.3px;color:#262626;right:485.6px;">8,60</div>
<div class="t" style="top:820.74px;font-size:13.3px;color:#262626;right:363.0px;">10,44</div>
<div class="t" style="top:820.74px;font-size:13.3px;color:#262626;right:240.4000000000001px;">10,77</div>
<div class="t" style="top:820.74px;font-size:13.3px;color:#262626;right:114.5px;">12,20</div>
<div class="a" style="left:456px;top:839px;width:860px;height:1px;background:#d3dceb"></div>
<div class="t" style="top:844.59px;font-size:13.3px;color:#2a2a2a;left:366.79999999999995px;width:300px;text-align:center;">Aprile</div>
<div class="t" style="top:844.59px;font-size:13.3px;color:#262626;right:730.8px;">5,61</div>
<div class="t" style="top:844.59px;font-size:13.3px;color:#262626;right:608.2px;">8,89</div>
<div class="t" style="top:844.59px;font-size:13.3px;color:#262626;right:485.6px;">12,34</div>
<div class="t" style="top:844.59px;font-size:13.3px;color:#262626;right:363.0px;">12,70</div>
<div class="t" style="top:844.59px;font-size:13.3px;color:#262626;right:240.4000000000001px;">11,00</div>
<div class="t" style="top:844.59px;font-size:13.3px;color:#262626;right:114.5px;">18,40</div>
<div class="a" style="left:456px;top:863px;width:860px;height:1px;background:#d3dceb"></div>
<div class="t" style="top:868.44px;font-size:13.3px;color:#2a2a2a;left:366.79999999999995px;width:300px;text-align:center;">Maggio</div>
<div class="t" style="top:868.44px;font-size:13.3px;color:#262626;right:730.8px;">8,23</div>
<div class="t" style="top:868.44px;font-size:13.3px;color:#262626;right:608.2px;">11,95</div>
<div class="t" style="top:868.44px;font-size:13.3px;color:#262626;right:485.6px;">14,84</div>
<div class="t" style="top:868.44px;font-size:13.3px;color:#262626;right:363.0px;">13,33</div>
<div class="t" style="top:868.44px;font-size:13.3px;color:#262626;right:240.4000000000001px;">10,19</div>
<div class="t" style="top:868.44px;font-size:13.3px;color:#262626;right:114.5px;">23,00</div>
<div class="a" style="left:456px;top:887px;width:860px;height:1px;background:#d3dceb"></div>
<div class="t" style="top:892.29px;font-size:13.3px;color:#2a2a2a;left:366.79999999999995px;width:300px;text-align:center;">Giugno</div>
<div class="t" style="top:892.29px;font-size:13.3px;color:#262626;right:730.8px;">9,82</div>
<div class="t" style="top:892.29px;font-size:13.3px;color:#262626;right:608.2px;">13,17</div>
<div class="t" style="top:892.29px;font-size:13.3px;color:#262626;right:485.6px;">15,41</div>
<div class="t" style="top:892.29px;font-size:13.3px;color:#262626;right:363.0px;">12,98</div>
<div class="t" style="top:892.29px;font-size:13.3px;color:#262626;right:240.4000000000001px;">9,55</div>
<div class="t" style="top:892.29px;font-size:13.3px;color:#262626;right:114.5px;">24,40</div>
<div class="a" style="left:456px;top:911px;width:860px;height:1px;background:#d3dceb"></div>
<div class="t" style="top:916.14px;font-size:13.3px;color:#2a2a2a;left:366.79999999999995px;width:300px;text-align:center;">Luglio</div>
<div class="t" style="top:916.14px;font-size:13.3px;color:#262626;right:730.8px;">9,98</div>
<div class="t" style="top:916.14px;font-size:13.3px;color:#262626;right:608.2px;">12,84</div>
<div class="t" style="top:916.14px;font-size:13.3px;color:#262626;right:485.6px;">14,87</div>
<div class="t" style="top:916.14px;font-size:13.3px;color:#262626;right:363.0px;">13,19</div>
<div class="t" style="top:916.14px;font-size:13.3px;color:#262626;right:240.4000000000001px;">10,47</div>
<div class="t" style="top:916.14px;font-size:13.3px;color:#262626;right:114.5px;">23,60</div>
<div class="a" style="left:456px;top:934px;width:860px;height:1px;background:#d3dceb"></div>
<div class="t" style="top:939.99px;font-size:13.3px;color:#2a2a2a;left:366.79999999999995px;width:300px;text-align:center;">Agosto</div>
<div class="t" style="top:939.99px;font-size:13.3px;color:#262626;right:730.8px;">7,89</div>
<div class="t" style="top:939.99px;font-size:13.3px;color:#262626;right:608.2px;">11,12</div>
<div class="t" style="top:939.99px;font-size:13.3px;color:#262626;right:485.6px;">14,04</div>
<div class="t" style="top:939.99px;font-size:13.3px;color:#262626;right:363.0px;">13,60</div>
<div class="t" style="top:939.99px;font-size:13.3px;color:#262626;right:240.4000000000001px;">11,40</div>
<div class="t" style="top:939.99px;font-size:13.3px;color:#262626;right:114.5px;">21,60</div>
<div class="a" style="left:456px;top:958px;width:860px;height:1px;background:#d3dceb"></div>
<div class="t" style="top:963.84px;font-size:13.3px;color:#2a2a2a;left:366.79999999999995px;width:300px;text-align:center;">Settembre</div>
<div class="t" style="top:963.84px;font-size:13.3px;color:#262626;right:730.8px;">4,54</div>
<div class="t" style="top:963.84px;font-size:13.3px;color:#262626;right:608.2px;">7,87</div>
<div class="t" style="top:963.84px;font-size:13.3px;color:#262626;right:485.6px;">12,36</div>
<div class="t" style="top:963.84px;font-size:13.3px;color:#262626;right:363.0px;">14,02</div>
<div class="t" style="top:963.84px;font-size:13.3px;color:#262626;right:240.4000000000001px;">13,24</div>
<div class="t" style="top:963.84px;font-size:13.3px;color:#262626;right:114.5px;">17,70</div>
<div class="a" style="left:456px;top:982px;width:860px;height:1px;background:#d3dceb"></div>
<div class="t" style="top:987.69px;font-size:13.3px;color:#2a2a2a;left:366.79999999999995px;width:300px;text-align:center;">Ottobre</div>
<div class="t" style="top:987.69px;font-size:13.3px;color:#262626;right:730.8px;">3,22</div>
<div class="t" style="top:987.69px;font-size:13.3px;color:#262626;right:608.2px;">4,67</div>
<div class="t" style="top:987.69px;font-size:13.3px;color:#262626;right:485.6px;">8,62</div>
<div class="t" style="top:987.69px;font-size:13.3px;color:#262626;right:363.0px;">11,69</div>
<div class="t" style="top:987.69px;font-size:13.3px;color:#262626;right:240.4000000000001px;">13,15</div>
<div class="t" style="top:987.69px;font-size:13.3px;color:#262626;right:114.5px;">11,70</div>
<div class="a" style="left:456px;top:1006px;width:860px;height:1px;background:#d3dceb"></div>
<div class="t" style="top:1011.54px;font-size:13.3px;color:#2a2a2a;left:366.79999999999995px;width:300px;text-align:center;">Novembre</div>
<div class="t" style="top:1011.54px;font-size:13.3px;color:#262626;right:730.8px;">2,13</div>
<div class="t" style="top:1011.54px;font-size:13.3px;color:#262626;right:608.2px;">2,55</div>
<div class="t" style="top:1011.54px;font-size:13.3px;color:#262626;right:485.6px;">5,22</div>
<div class="t" style="top:1011.54px;font-size:13.3px;color:#262626;right:363.0px;">8,27</div>
<div class="t" style="top:1011.54px;font-size:13.3px;color:#262626;right:240.4000000000001px;">10,22</div>
<div class="t" style="top:1011.54px;font-size:13.3px;color:#262626;right:114.5px;">6,80</div>
<div class="a" style="left:456px;top:1030px;width:860px;height:1px;background:#d3dceb"></div>
<div class="t" style="top:1035.39px;font-size:13.3px;color:#2a2a2a;left:366.79999999999995px;width:300px;text-align:center;">Dicembre</div>
<div class="t" style="top:1035.39px;font-size:13.3px;color:#262626;right:730.8px;">1,69</div>
<div class="t" style="top:1035.39px;font-size:13.3px;color:#262626;right:608.2px;">1,85</div>
<div class="t" style="top:1035.39px;font-size:13.3px;color:#262626;right:485.6px;">3,80</div>
<div class="t" style="top:1035.39px;font-size:13.3px;color:#262626;right:363.0px;">6,49</div>
<div class="t" style="top:1035.39px;font-size:13.3px;color:#262626;right:240.4000000000001px;">8,25</div>
<div class="t" style="top:1035.39px;font-size:13.3px;color:#262626;right:114.5px;">4,90</div>
</body></html>
